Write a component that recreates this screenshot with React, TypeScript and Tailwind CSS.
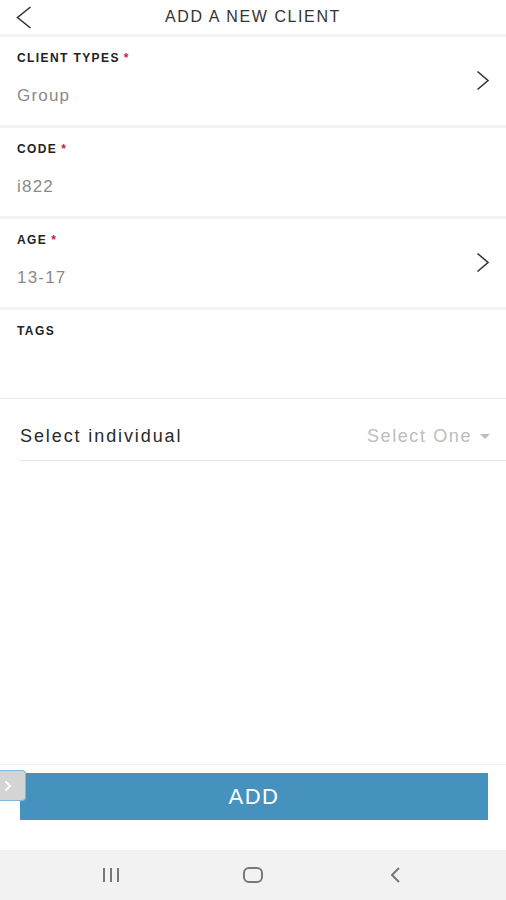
const font = { fontFamily: '"Liberation Sans", Arial, sans-serif' };

function Chevron() {
  return (
    <svg width="14" height="21" viewBox="0 0 14 21" className="mt-[-2px]">
      <path d="M1.5 1.5L12 10.5L1.5 19.5" fill="none" stroke="#333" strokeWidth="1.6" />
    </svg>
  );
}

function Field({
  label,
  value,
  required,
  arrow,
}: {
  label: string;
  value?: string;
  required?: boolean;
  arrow?: boolean;
}) {
  return (
    <div className="flex h-[88px] items-center justify-between bg-white pl-[17px] pr-[16px]">
      <div className="flex h-full flex-col pt-[14px]">
        <div className="text-[12px] font-bold leading-[14px] tracking-[1.4px] text-[#222]">
          {label}
          {required && <span className="ml-[4px] text-[#c2185b]">*</span>}
        </div>
        {value && (
          <div className="mt-[21px] text-[17px] leading-[20px] tracking-[1.2px] text-[#8a8a8a]">
            {value}
          </div>
        )}
      </div>
      {arrow && <Chevron />}
    </div>
  );
}

export default function App() {
  return (
    <div className="flex h-[900px] w-[506px] flex-col bg-white" style={font}>
      {/* Header */}
      <div className="relative flex h-[34px] items-center justify-center">
        <svg
          width="16"
          height="24"
          viewBox="0 0 16 24"
          className="absolute left-[16px] top-[6px]"
        >
          <path d="M14.5 1L1.5 11.5L14.5 22" fill="none" stroke="#333" strokeWidth="1.6" />
        </svg>
        <div className="text-[16px] tracking-[1.6px] text-[#333]">ADD A NEW CLIENT</div>
      </div>
      <div className="h-[3px] bg-[#f3f3f3]" />

      <Field label="CLIENT TYPES" value="Group" required arrow />
      <div className="h-[3px] bg-[#f3f3f3]" />
      <Field label="CODE" value="i822" required />
      <div className="h-[3px] bg-[#f3f3f3]" />
      <Field label="AGE" value="13-17" required arrow />
      <div className="h-[3px] bg-[#f3f3f3]" />
      <Field label="TAGS" />
      <div className="h-px bg-[#e8e8e8]" />

      {/* Select individual */}
      <div className="ml-[20px] flex h-[62px] items-center justify-between border-b border-[#e6e6e6] pr-[16px] pt-[14px]">
        <div className="text-[18px] tracking-[1.9px] text-[#2a2a2a]">Select individual</div>
        <div className="flex items-center gap-[8px] text-[18px] tracking-[1.6px] text-[#bdbdbd]">
          Select One
          <svg width="10" height="6" viewBox="0 0 10 6">
            <path d="M0 0h10L5 5z" fill="#bdbdbd" />
          </svg>
        </div>
      </div>

      <div className="flex-1" />

      {/* Bottom action */}
      <div className="relative h-[86px] border-t border-[#f0f0f0] pt-[8px]">
        <button className="mx-[20px] flex h-[47px] w-[468px] items-center justify-center bg-[#4592bf] text-[22px] tracking-[1.5px] text-white">
          ADD
        </button>
        <div className="absolute left-0 top-[5px] flex h-[31px] w-[26px] items-center justify-start rounded-r-[4px] border border-l-0 border-[#7fb8d8] bg-[#d4d4d4] pl-[4px]">
          <svg width="8" height="12" viewBox="0 0 8 12">
            <path d="M1.5 1.5L6 6l-4.5 4.5" fill="none" stroke="#fff" strokeWidth="1.8" />
          </svg>
        </div>
      </div>

      {/* Android nav bar */}
      <div className="flex h-[50px] items-center bg-[#f2f2f2] pl-[102px]">
        <svg width="18" height="16" viewBox="0 0 18 16">
          <path d="M2 1v14M9 1v14M16 1v14" stroke="#777" strokeWidth="2" />
        </svg>
        <svg width="20" height="16" viewBox="0 0 20 16" className="ml-[123px]">
          <rect x="1" y="1" width="18" height="14" rx="5" fill="none" stroke="#777" strokeWidth="2" />
        </svg>
        <svg width="12" height="18" viewBox="0 0 12 18" className="ml-[126px]">
          <path d="M10 2L3 9l7 7" fill="none" stroke="#777" strokeWidth="2" />
        </svg>
      </div>
    </div>
  );
}
